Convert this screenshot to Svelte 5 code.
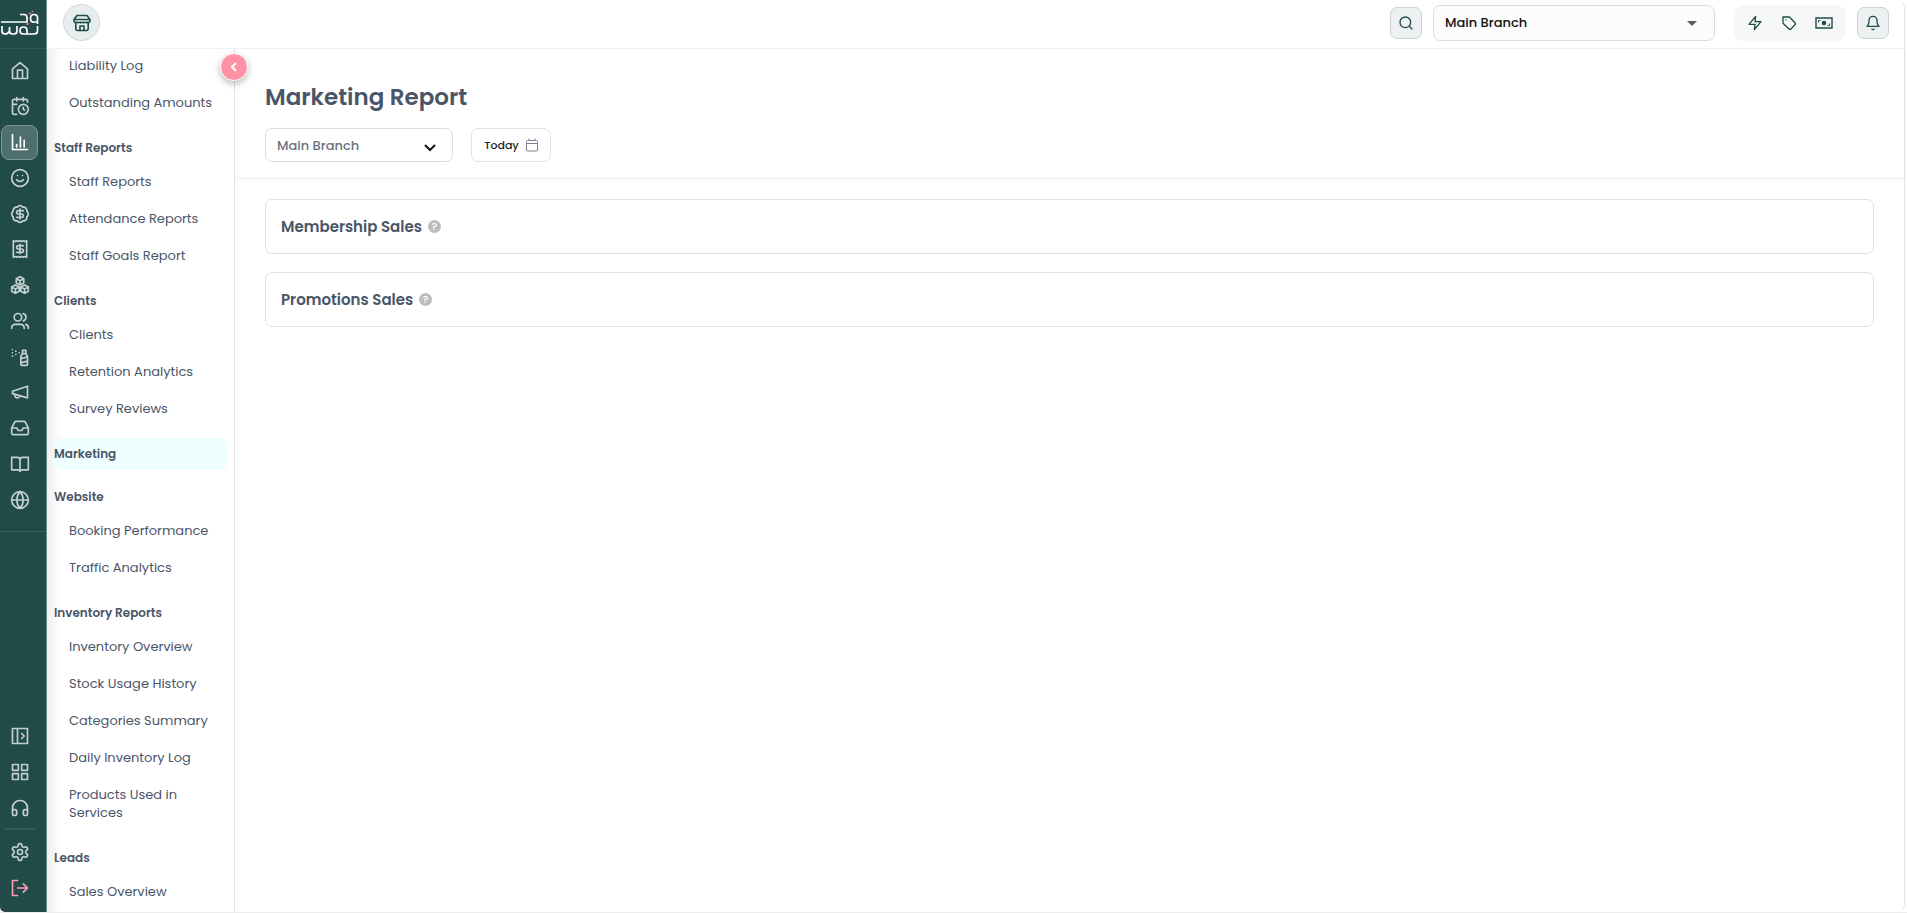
<script lang="ts">
  const mainNav = [
    { label: 'Home', d: 'M3 9.500 12 2l9 7.500V21H3zM9 21V11h6v10' },
    { label: 'Appointments', d: 'M21 7.500V6a2 2 0 0 0-2-2H5a2 2 0 0 0-2 2v14a2 2 0 0 0 2 2h3M16 2v4M8 2v4M3 10h5M16 10a6 6 0 1 0 0 12 6 6 0 0 0 0-12M16 13.500v2.500l1.500 1' },
    { label: 'Reports', active: true, d: 'M3 3v18h18M8 18v-3M12.500 18V6M17 18v-8' },
    { label: 'Reviews', d: 'M12 2a10 10 0 1 0 0 20 10 10 0 0 0 0-20M8 14s1.500 2 4 2 4-2 4-2M9 9h.01M15 9h.01' },
    { label: 'Sales', d: 'M3.850 8.620a4 4 0 0 1 4.780-4.770 4 4 0 0 1 6.740 0 4 4 0 0 1 4.780 4.780 4 4 0 0 1 0 6.740 4 4 0 0 1-4.770 4.780 4 4 0 0 1-6.750 0 4 4 0 0 1-4.780-4.770 4 4 0 0 1 0-6.760ZM16 8h-6a2 2 0 0 0 0 4h4a2 2 0 0 1 0 4H8M12 18V6' },
    { label: 'Invoices', d: 'M4 2v20l2-1 2 1 2-1 2 1 2-1 2 1 2-1 2 1V2l-2 1-2-1-2 1-2-1-2 1-2-1-2 1zM16 8h-6a2 2 0 0 0 0 4h4a2 2 0 0 1 0 4H8M12 17.500v-11' },
    { label: 'Inventory', d: 'M12 2l4.500 2.500v5L12 12 7.500 9.500v-5zM7.500 4.500l4.500 2.300 4.500-2.300M12 7v5M6.500 12l4.500 2.500v5L6.500 22 2 19.500v-5zM2 14.500l4.500 2.300 4.500-2.300M6.500 17v5M17.500 12l4.500 2.500v5L17.500 22 13 19.500v-5zM13 14.500l4.500 2.300 4.500-2.300M17.500 17v5' },
    { label: 'Clients', d: 'M9.500 3a4.500 4.500 0 1 0 0 9 4.500 4.500 0 0 0 0-9M2 21v-1a4 4 0 0 1 4-4h7a4 4 0 0 1 4 4v1M16 3.200a4.500 4.500 0 0 1 0 8.600M19 16a4 4 0 0 1 3 4v1' },
    { label: 'Products', d: 'M3 3h.01M3 7h.01M3 11h.01M7 5h.01M7 9h.01M11 7h.01M15 4h4v4h-4zM15 8l-2 3v10q0 1 1 1h6q1 0 1-1V11l-2-3M13 14l8-2M13 19l8-2' },
    { label: 'Marketing', d: 'm3 11 18-6v14L3 14zM11.600 16.800a3 3 0 1 1-5.800-1.600' },
    { label: 'Inbox', d: 'M22 12h-6l-2 3h-4l-2-3H2M5.450 5.110 2 12v6a2 2 0 0 0 2 2h16a2 2 0 0 0 2-2v-6l-3.450-6.890A2 2 0 0 0 16.760 4H7.240a2 2 0 0 0-1.790 1.110z' },
    { label: 'Catalogue', d: 'M12 6v15M2 4h7a3 3 0 0 1 3 3 3 3 0 0 1 3-3h7v15h-7a3 3 0 0 0-3 2 3 3 0 0 0-3-2H2z' },
    { label: 'Website', d: 'M12 2a10 10 0 1 0 0 20 10 10 0 0 0 0-20M12 2a15 15 0 0 0 0 20 15 15 0 0 0 0-20M2 12h20' }
  ];
  const toolNav = [
    { label: 'Expand menu', d: 'M3 3h18v18H3zM9 3v18M14 9l3 3-3 3' },
    { label: 'Apps', d: 'M3 3h7v7H3zM14 3h7v7h-7zM14 14h7v7h-7zM3 14h7v7H3z' },
    { label: 'Support', d: 'M3 14h3a2 2 0 0 1 2 2v3a2 2 0 0 1-2 2H5a2 2 0 0 1-2-2v-7a9 9 0 0 1 18 0v7a2 2 0 0 1-2 2h-1a2 2 0 0 1-2-2v-3a2 2 0 0 1 2-2h3' }
  ];
  const groups = [
    { title: '', links: ['Liability Log', 'Outstanding Amounts'] },
    { title: 'Staff Reports', links: ['Staff Reports', 'Attendance Reports', 'Staff Goals Report'] },
    { title: 'Clients', links: ['Clients', 'Retention Analytics', 'Survey Reviews'] },
    { title: 'Marketing', active: true, links: [] },
    { title: 'Website', links: ['Booking Performance', 'Traffic Analytics'] },
    { title: 'Inventory Reports', links: ['Inventory Overview', 'Stock Usage History', 'Categories Summary', 'Daily Inventory Log', 'Products Used in Services'] },
    { title: 'Leads', links: ['Sales Overview'] }
  ];
  const cards = ['Membership Sales', 'Promotions Sales'];
</script>

{#snippet icon(d: string, size = 20)}
  <svg width={size} height={size} viewBox="0 0 24 24" fill="none" stroke="currentColor" stroke-width="2" stroke-linecap="round" stroke-linejoin="round" aria-hidden="true"><path {d} /></svg>
{/snippet}

<div class="app">
  <div class="rail">
    <a class="logo" href="#home" aria-label="Waqt">
      <svg width="40" height="26" viewBox="0 0 40 26" fill="none" stroke="#fff" stroke-width="1.700" aria-hidden="true">
        <path d="M1 12H27V7.500Q27 4.500 24 4.500H20" />
        <path d="M37.500 14V8Q37.500 4.500 34 4.500T30.500 8.500T34 12H37" />
        <path d="M2 16V21Q2 24 5 24T9.500 21V17V21Q9.500 24 12.500 24H14Q17 24 17 21V16" />
        <path d="M27 24H23Q20 24 20 20.500T23.500 17T27 20.500V24H34Q37.500 24 37.500 21V16" />
        <path d="m29 4 2-1m1-1 1-1M26 14h3" stroke="#f5788f" />
      </svg>
    </a>
    <nav class="main-nav" aria-label="Main">
      {#each mainNav as item}
        <a class="rail-item" class:active={item.active} href="#{item.label}" aria-label={item.label}>{@render icon(item.d)}</a>
      {/each}
    </nav>
    <nav class="tool-nav" aria-label="Tools">
      {#each toolNav as item}
        <a class="rail-item" href="#{item.label}" aria-label={item.label}>{@render icon(item.d)}</a>
      {/each}
      <hr />
      <a class="rail-item" href="#settings" aria-label="Settings">{@render icon('M12.220 2h-.44a2 2 0 0 0-2 2v.18a2 2 0 0 1-1 1.730l-.43.25a2 2 0 0 1-2 0l-.15-.08a2 2 0 0 0-2.730.73l-.22.38a2 2 0 0 0 .73 2.730l.15.1a2 2 0 0 1 1 1.720v.51a2 2 0 0 1-1 1.740l-.15.09a2 2 0 0 0-.73 2.730l.22.38a2 2 0 0 0 2.730.73l.15-.08a2 2 0 0 1 2 0l.43.25a2 2 0 0 1 1 1.730V20a2 2 0 0 0 2 2h.44a2 2 0 0 0 2-2v-.18a2 2 0 0 1 1-1.730l.43-.25a2 2 0 0 1 2 0l.15.08a2 2 0 0 0 2.730-.73l.22-.39a2 2 0 0 0-.73-2.730l-.15-.08a2 2 0 0 1-1-1.740v-.5a2 2 0 0 1 1-1.740l.15-.09a2 2 0 0 0 .73-2.730l-.22-.38a2 2 0 0 0-2.730-.73l-.15.08a2 2 0 0 1-2 0l-.43-.25a2 2 0 0 1-1-1.730V4a2 2 0 0 0-2-2zM12 9a3 3 0 1 0 0 6 3 3 0 0 0 0-6')}</a>
      <a class="rail-item exit" href="#logout" aria-label="Log out">{@render icon('M9 21H3V3h6M16 17l5-5-5-5M21 12H9')}</a>
    </nav>
  </div>

  <div class="page">
    <header class="topbar">
      <button class="store" aria-label="Store">
        <svg width="18" height="18" viewBox="0 0 18 18" fill="none" stroke="currentColor" stroke-width="1.600" stroke-linejoin="round" stroke-linecap="round" aria-hidden="true">
          <path d="M4 1.500h10l3 4H1zM1 5.500V7a2 2 0 0 0 2.500 1.500h11A2 2 0 0 0 17 7V5.500M2.800 8.500v6a2 2 0 0 0 2 2h8.400a2 2 0 0 0 2-2v-6M7 16.500V12h4v4.500" />
          <path d="M4 8v.8M7.500 8v.8M10.500 8v.8M14 8v.8" stroke-width="1.200" />
        </svg>
      </button>
      <button class="square" aria-label="Search">{@render icon('M11 3a8 8 0 1 0 0 16 8 8 0 0 0 0-16M21 21l-4.300-4.300', 16)}</button>
      <div class="branch">
        <select aria-label="Current branch"><option>Main Branch</option></select>
        <svg width="10" height="5" viewBox="0 0 10 5" aria-hidden="true"><path d="M0 0h10L5 5z" fill="#5d5d55" /></svg>
      </div>
      <div class="quick">
        <button aria-label="Quick actions">{@render icon('M13 2 3 14h9l-1 8 10-12h-9z', 16)}</button>
        <button aria-label="Offers">{@render icon('M3 3h9.500l8.500 8.500a2 2 0 0 1 0 3L15 21a2 2 0 0 1-3 0L3 12.500zM7.500 7.500h.01', 16)}</button>
        <button aria-label="Cash register">
          <svg width="18" height="12" viewBox="0 0 18 12" fill="none" stroke="currentColor" aria-hidden="true"><path d="M1 1h16v10H1z" stroke-width="1.400" /><circle cx="9" cy="6" r="2.300" fill="currentColor" stroke="none" /><path d="M3.500 5.500V3.500h2M14.500 6.500v2h-2" /></svg>
        </button>
      </div>
      <button class="square bell" aria-label="Notifications">{@render icon('M6 8a6 6 0 0 1 12 0c0 7 3 9 3 9H3s3-2 3-9M10.300 21a2 2 0 0 0 3.400 0', 16)}</button>
    </header>

    <div class="body">
      <aside>
        <nav class="reports" aria-label="Reports">
          {#each groups as group}
            <section>
              {#if group.title}<h2 class:active={group.active}>{group.title}</h2>{/if}
              {#if group.links.length}
                <ul>
                  {#each group.links as link}<li><a href="#{link}">{link}</a></li>{/each}
                </ul>
              {/if}
            </section>
          {/each}
        </nav>
        <button class="collapse" aria-label="Collapse reports menu">
          <svg width="6" height="10" viewBox="0 0 6 10" fill="none" stroke="#fff" stroke-width="2" aria-hidden="true"><path d="M5 1 1 5l4 4" /></svg>
        </button>
      </aside>

      <main>
        <div class="heading">
          <h1>Marketing Report</h1>
          <div class="filters">
            <div class="filter-branch">
              <select aria-label="Report branch"><option>Main Branch</option></select>
              <svg width="12" height="8" viewBox="0 0 12 8" fill="none" stroke="#111" stroke-width="2" aria-hidden="true"><path d="m1 1 5 5 5-5" /></svg>
            </div>
            <button class="date">Today
              <svg width="12" height="14" viewBox="0 0 12 14" fill="none" stroke="#7b8190" aria-hidden="true"><rect x="0.500" y="2.500" width="11" height="10.500" rx="1" /><path d="M0.500 5.500h11M3 0.500v2M9 0.500v2" /></svg>
            </button>
          </div>
        </div>
        <div class="cards">
          {#each cards as card}
            <section class="card">
              <h3>{card}</h3>
              <button class="help" aria-label="About {card}">?</button>
            </section>
          {/each}
        </div>
      </main>
    </div>
  </div>
</div>

<style>
  :global(body) { margin: 0; background: #fff; }
  * { box-sizing: border-box; }
  h1, h2, h3, ul { margin: 0; padding: 0; }
  ul { list-style: none; }
  svg { display: block; flex: none; }
  a { color: inherit; text-decoration: none; }
  button { display: flex; align-items: center; justify-content: center; padding: 0; border: 0; background: none; color: #1f4b49; font: inherit; }
  .app { display: flex; height: 100vh; padding-right: 2px; overflow: hidden; font-family: Poppins, Inter, sans-serif; color: #4a5568; border-bottom: 1px solid #ececec; background: #fff; }

  .rail { display: flex; flex-direction: column; flex: none; width: 47px; background: #204b49; border-right: 1px solid #6f8b89; border-bottom-left-radius: 5px; color: #c3d0cf; }
  .logo { display: flex; align-items: center; height: 49px; padding-bottom: 2px; border-bottom: 1px solid #2d5b58; }
  .main-nav { display: grid; grid-auto-rows: 1fr; height: 483px; padding: 4px 0 13px; border-bottom: 1px solid #365f5c; }
  .rail-item { display: flex; align-items: center; justify-content: center; width: 37px; height: 36px; margin-left: 1px; border: 1px solid transparent; border-radius: 8px; }
  .main-nav .rail-item { height: 35px; }
  .rail-item.active { background: #4d706e; border-color: #7d9694; color: #fff; }
  .rail-item.exit { color: #ff9bad; }
  .tool-nav { margin-top: auto; padding-bottom: 6px; }
  hr { width: 30px; height: 2px; margin: 2px 0 4px 5px; border: 0; background: #345c5a; }

  .page { display: flex; flex-direction: column; flex: 1; min-width: 0; border-right: 1px solid #e6e6e6; border-radius: 0 8px 8px 0; }
  .topbar { display: flex; align-items: center; flex: none; height: 49px; padding: 0 15px 3px 16px; border-bottom: 1px solid #eaf3f2; }
  .store { width: 37px; height: 37px; margin-right: auto; border: 1px solid #ccd9d8; border-radius: 50%; background: #e7eded; }
  .square { width: 32px; height: 32px; border: 1px solid #c8d6d6; border-radius: 7px; background: #ecf0f1; }
  .branch { position: relative; width: 282px; margin: 0 19px 0 11px; }
  select { display: block; width: 100%; appearance: none; font-family: inherit; font-size: 13px; font-weight: 500; border: 1px solid #dcdcdc; border-radius: 7px; }
  .branch select { height: 36px; padding: 0 11px; color: #111; background: #fcfcfc; }
  .branch svg { position: absolute; right: 18px; top: 16px; pointer-events: none; }
  .quick { display: flex; align-items: center; justify-content: space-between; width: 112px; height: 36px; padding: 0 13px; border-radius: 9px; background: #f6f8f7; }
  .bell { margin-left: 11px; }

  .body { display: flex; flex: 1; min-height: 0; }
  aside { position: relative; flex: none; width: 188px; padding: 0 7px; border-right: 1px solid #e0e0e0; background: linear-gradient(90deg, #efefef, #fff 14px); }
  .reports { display: flex; flex-direction: column; gap: 11px; height: 100%; margin-top: -1px; overflow: hidden; }
  .reports section { flex: none; }
  h2 { height: 32px; border-radius: 6px; font-size: 12px; line-height: 32px; font-weight: 600; }
  h2.active { background: #effefe; }
  ul { display: flex; flex-direction: column; gap: 1px; }
  li a { display: block; padding: 9px 0 9px 15px; font-size: 13px; line-height: 18px; font-weight: 400; }
  .collapse { position: absolute; right: -14px; top: 4px; width: 28px; height: 28px; border: 1px solid #fff; border-radius: 50%; background: #ff91a6; box-shadow: 0 3px 7px rgb(0 0 0 / 25%); }

  main { flex: 1; min-width: 0; }
  .heading { padding: 30px 30px 15px; box-shadow: 0 2px 5px rgb(0 0 0 / 7%); }
  h1 { font-size: 23px; line-height: 36px; font-weight: 600; }
  .filters { display: flex; gap: 18px; margin-top: 13px; }
  .filter-branch { position: relative; width: 188px; }
  .filter-branch select { height: 34px; padding: 0 11px; color: #6b7280; background: #fff; }
  .filter-branch svg { position: absolute; right: 17px; top: 16px; pointer-events: none; }
  .date { gap: 7px; width: 80px; height: 34px; border: 1px solid #d8e6e4; border-radius: 7px; font-size: 11px; font-weight: 500; color: #222; }
  .cards { display: flex; flex-direction: column; gap: 18px; padding: 22px 30px; }
  .card { display: flex; align-items: center; gap: 6px; height: 55px; padding: 0 15px; border: 1px solid #e0e0e0; border-radius: 7px; }
  h3 { font-size: 15px; line-height: 24px; font-weight: 600; }
  .help { width: 13px; height: 13px; border-radius: 50%; background: #bdbdbd; color: #fff; font-size: 11px; line-height: 13px; font-weight: 500; }
</style>
